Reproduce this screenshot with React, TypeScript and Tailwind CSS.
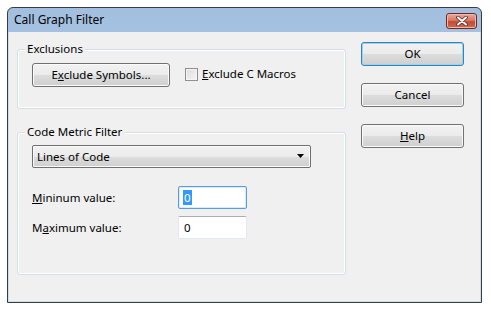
import { ReactNode } from 'react'

const font = { fontFamily: '"Noto Sans", "Segoe UI", sans-serif' }

function Btn({ children, focused = false, className = '' }: { children: ReactNode; focused?: boolean; className?: string }) {
  const border = focused
    ? 'border-[#3c7fb1] shadow-[inset_0_0_0_1px_#8fd8f8]'
    : 'border-[#707070] shadow-[inset_0_0_0_1px_#fbfbfb]'
  return (
    <div
      className={`flex items-center justify-center rounded-[3px] border bg-[linear-gradient(to_bottom,#f2f2f2_0%,#ebebeb_50%,#dddddd_50%,#cfcfcf_100%)] text-[11.5px] text-black ${border} ${className}`}
    >
      {children}
    </div>
  )
}

function GroupBox({ label, className = '', children }: { label: string; className?: string; children: ReactNode }) {
  return (
    <div className={`relative rounded-[3px] border border-[#d5dfe5] shadow-[inset_0_0_0_1px_#ffffff] ${className}`}>
      <span className="absolute -top-[9px] left-[7px] bg-[#f0f0f0] px-[2px] text-[11.5px] leading-[16px] text-black">
        {label}
      </span>
      {children}
    </div>
  )
}

function CloseButton() {
  return (
    <div className="mr-[4px] mt-[5px] flex h-[16px] w-[31px] items-center justify-center rounded-[3px] border border-[#6e2a22] bg-[linear-gradient(to_bottom,#e9a99b_0%,#d77a68_45%,#c24b34_55%,#cf6a4f_100%)] shadow-[inset_0_0_0_1px_#eeb8aa]">
      <svg width="14" height="10" viewBox="0 0 14 10">
        <path d="M3 1.5 L11 8.5 M11 1.5 L3 8.5" stroke="#5a2a24" strokeWidth="3.6" strokeLinecap="round" />
        <path d="M3 1.5 L11 8.5 M11 1.5 L3 8.5" stroke="#ffffff" strokeWidth="2" strokeLinecap="round" />
      </svg>
    </div>
  )
}

export default function App() {
  return (
    <div className="min-h-[312px] bg-white pl-[7px] pt-[7px]" style={font}>
      <div className="flex h-[296px] w-[475px] flex-col rounded-t-[6px] border border-[#3b3b3b] bg-[linear-gradient(to_bottom,#a3bfe0,#bcd2ea)]">
        {/* title bar */}
        <div className="flex h-[24px] shrink-0 items-start justify-between">
          <span className="pl-[6px] pt-[4px] text-[12px] leading-[16px] text-black">Call Graph Filter</span>
          <CloseButton />
        </div>

        {/* client area */}
        <div className="flex flex-1 border border-t-0 border-[#c9def2] bg-[#f0f0f0]">
          {/* left column */}
          <div className="flex flex-col pl-[8px] pt-[17px]">
            <GroupBox label="Exclusions" className="h-[60px] w-[329px]">
              <div className="flex items-center pl-[14px] pt-[13px]">
                <Btn className="h-[24px] w-[138px]">
                  <span>
                    E<span className="underline underline-offset-1">x</span>clude Symbols...
                  </span>
                </Btn>
                <div className="ml-[15px] flex items-center gap-[4px] pb-[2px]">
                  <div className="h-[13px] w-[13px] border border-[#8e8f8f] bg-[linear-gradient(135deg,#dcdcdc,#f6f6f6)] shadow-[inset_0_0_0_1px_#f4f4f4]" />
                  <span className="text-[11.5px] text-black">
                    <span className="underline underline-offset-1">E</span>xclude C Macros
                  </span>
                </div>
              </div>
            </GroupBox>

            <GroupBox label="Code Metric Filter" className="mt-[23px] h-[143px] w-[329px]">
              <div className="flex flex-col pl-[14px] pt-[12px]">
                <div className="flex h-[23px] w-[279px] items-center justify-between rounded-[2px] border border-[#707070] bg-[linear-gradient(to_bottom,#f2f2f2_0%,#ebebeb_50%,#dddddd_50%,#cfcfcf_100%)] pl-[4px] pr-[5px] text-[11.5px] text-black shadow-[inset_0_0_0_1px_#fbfbfb]">
                  <span>Lines of Code</span>
                  <svg width="8" height="5" viewBox="0 0 8 5">
                    <path d="M0 0 H7 L3.5 4 Z" fill="#000" />
                  </svg>
                </div>

                <div className="mt-[18px] flex items-center">
                  <span className="w-[146px] text-[11.5px] text-black">
                    <span className="underline underline-offset-1">M</span>ininum value:
                  </span>
                  <div className="flex h-[23px] w-[69px] items-center rounded-[2px] border border-[#569de5] bg-white pl-[4px] shadow-[inset_0_0_0_1px_#dbeaf8]">
                    <span className="bg-[#3399ff] px-[1px] text-[11.5px] leading-[15px] text-white">0</span>
                  </div>
                </div>

                <div className="mt-[7px] flex items-center">
                  <span className="w-[146px] text-[11.5px] text-black">
                    M<span className="underline underline-offset-1">a</span>ximum value:
                  </span>
                  <div className="flex h-[23px] w-[69px] items-center rounded-[2px] border border-[#e3e9ef] border-t-[#abadb3] bg-white pl-[5px]">
                    <span className="text-[11.5px] text-black">0</span>
                  </div>
                </div>
              </div>
            </GroupBox>
          </div>

          {/* right column */}
          <div className="ml-[15px] flex flex-col gap-[17px] pt-[10px]">
            <Btn focused className="h-[24px] w-[103px]">OK</Btn>
            <Btn className="h-[24px] w-[103px]">Cancel</Btn>
            <Btn className="h-[24px] w-[103px]">
              <span>
                <span className="underline underline-offset-1">H</span>elp
              </span>
            </Btn>
          </div>
        </div>
      </div>
    </div>
  )
}
